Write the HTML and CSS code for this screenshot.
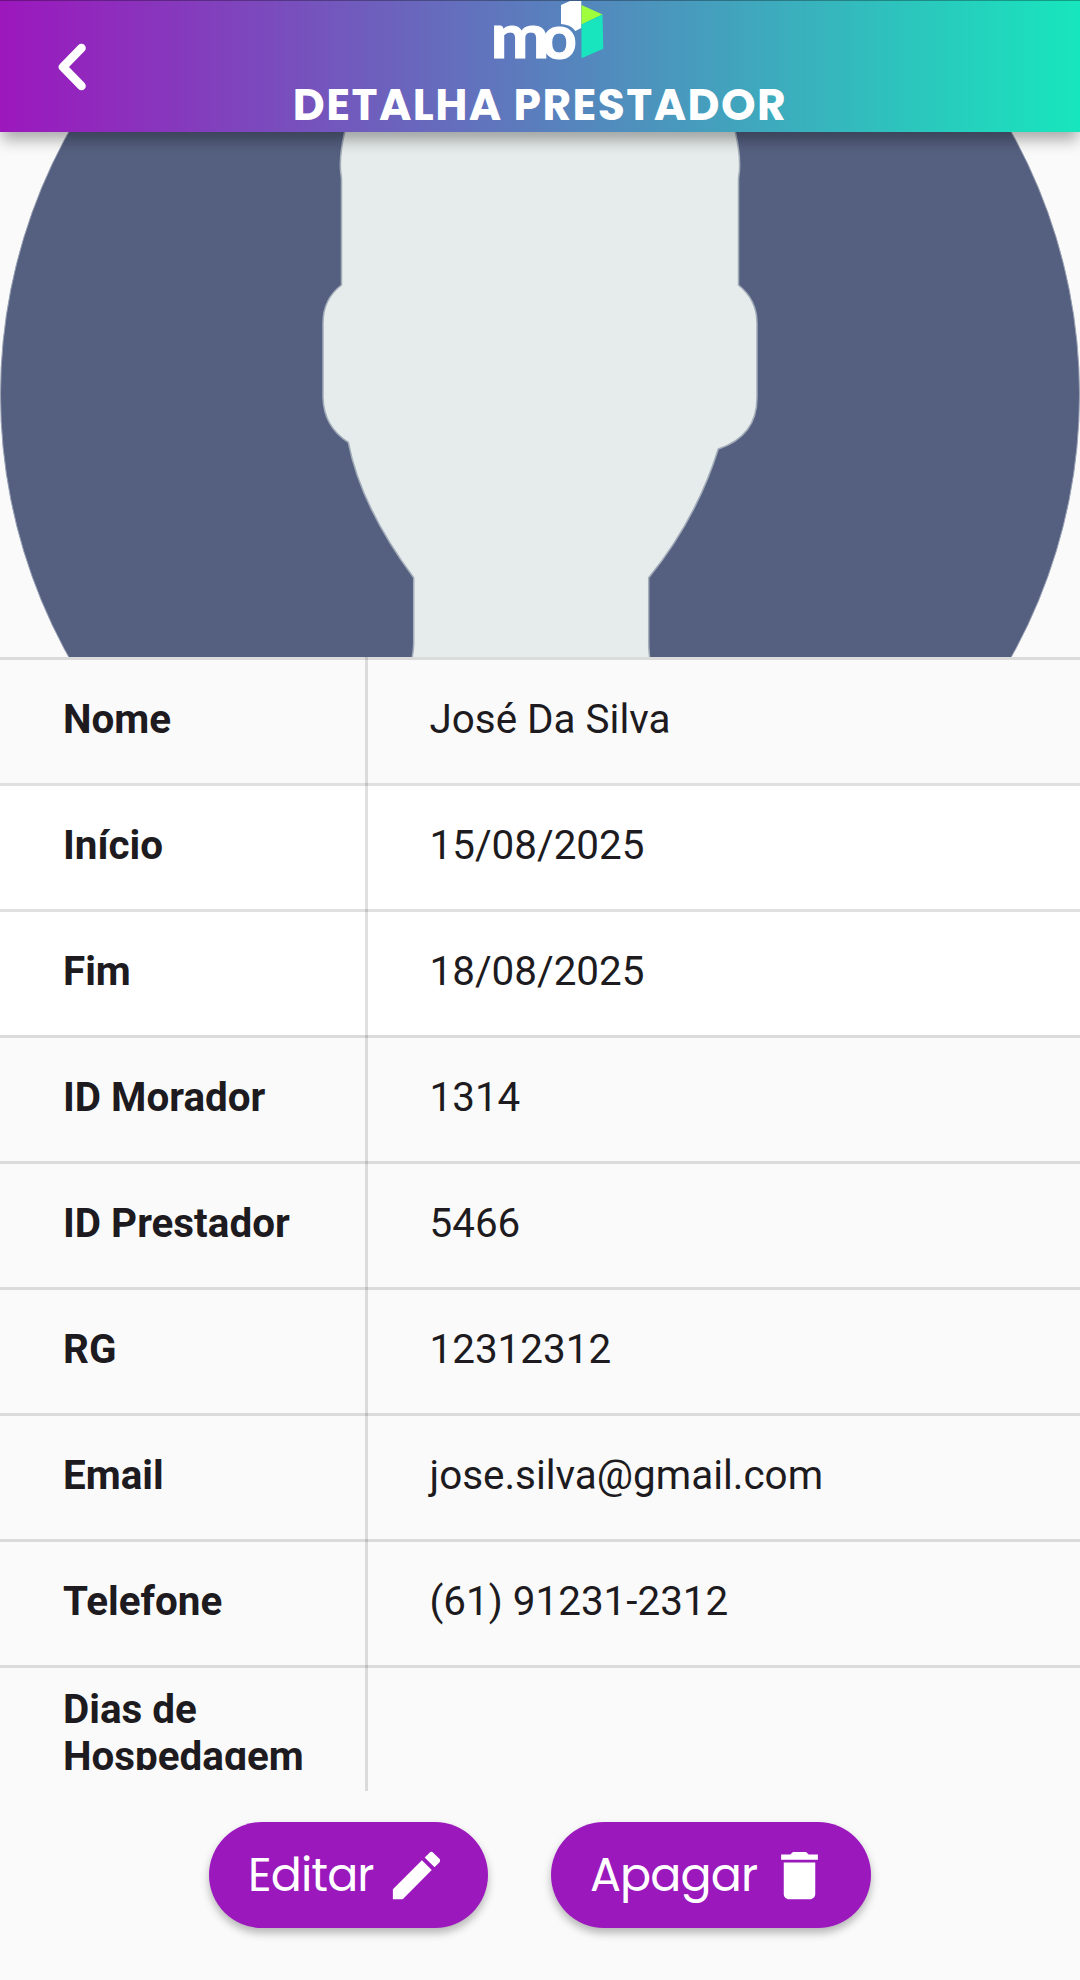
FILE: index.html
```html
<!DOCTYPE html>
<html lang="pt-BR">
<head>
<meta charset="utf-8">
<title>Detalha Prestador</title>
<link rel="stylesheet" href="styles.css">
</head>
<body>
<header class="topbar">
  <button class="back" aria-label="Voltar">
    <svg width="36" height="56" viewBox="0 0 36 56"><path d="M27.500 9 9 28l18.500 19" fill="none" stroke="#fff" stroke-width="8.600" stroke-linecap="round" stroke-linejoin="round"/></svg>
  </button>
  <div class="brand">
    <svg class="logo" width="120" height="70" viewBox="0 0 120 70">
      <text class="logo-text" x="8.500" y="58" textLength="59" lengthAdjust="spacingAndGlyphs">m</text>
      <text class="logo-text" x="77.300" y="58.500" text-anchor="middle">o</text>
      <path d="M79 5 88 1h11.300v27l-6 3Q89 24.500 79 24z" fill="#fff"/>
      <path d="M99.500 5l21 9.500-21 10z" fill="#a0ff3c"/>
      <path d="M99.500 24.500l21-10 .8 34.200-21.800 9.600z" fill="#18e5bd"/>
    </svg>
    <h1 class="title">DETALHA PRESTADOR</h1>
  </div>
</header>
<main>
  <svg class="photo" width="1080" height="525" viewBox="0 132 1080 525">
    <circle class="disc" cx="540" cy="394.500" r="539.500"/>
    <path class="figure" d="M340 100 344.700 132Q339.500 154 340.500 170L341.500 179V285Q323 299 323 323V398Q324 427 348.300 442.300Q361 507 413.700 577.700V643Q413.700 651 410 670H651Q648.700 651 648.700 643V577.700Q696 520 718.300 449Q757 436 757 398V323Q757 300 738.500 285V179L739.500 170Q740.500 154 735.300 132L740 100z"/>
  </svg>
  <dl class="table">
    <div class="row"><dt>Nome</dt><dd>José Da Silva</dd></div>
    <div class="row row-white"><dt>Início</dt><dd>15/08/2025</dd></div>
    <div class="row row-white"><dt>Fim</dt><dd>18/08/2025</dd></div>
    <div class="row"><dt>ID Morador</dt><dd>1314</dd></div>
    <div class="row"><dt>ID Prestador</dt><dd>5466</dd></div>
    <div class="row"><dt>RG</dt><dd>12312312</dd></div>
    <div class="row"><dt>Email</dt><dd>jose.silva@gmail.com</dd></div>
    <div class="row"><dt>Telefone</dt><dd>(61) 91231-2312</dd></div>
    <div class="row"><dt><span class="clip">Dias de<br>Hospedagem</span></dt><dd></dd></div>
  </dl>
</main>
<footer class="actions">
  <button class="btn btn-edit"><span class="btn-label">Editar</span>
    <svg width="63" height="63" viewBox="0 0 24 24"><path fill="#fff" d="M3 17.250V21h3.750L17.810 9.940l-3.750-3.750L3 17.250zM20.710 7.040c.39-.39.39-1.020 0-1.410l-2.340-2.340c-.39-.39-1.020-.39-1.410 0l-1.830 1.830 3.750 3.750 1.830-1.830z"/></svg>
  </button>
  <button class="btn btn-delete"><span class="btn-label">Apagar</span>
    <svg width="63" height="63" viewBox="0 0 24 24"><path fill="#fff" d="M6 19c0 1.100.9 2 2 2h8c1.100 0 2-.9 2-2V7H6v12zM19 4h-3.500l-1-1h-5l-1 1H5v2h14V4z"/></svg>
  </button>
</footer>
</body>
</html>
```
FILE: styles.css
```css
* { box-sizing: border-box; margin: 0; padding: 0; }
body {
  width: 1080px;
  height: 1980px;
  overflow: hidden;
  display: flex;
  flex-direction: column;
  background: #fafafa;
  color: #1d1b20;
  font-family: Roboto, sans-serif;
}
button { border: 0; background: none; color: inherit; }
svg { display: block; flex: none; }

.topbar {
  position: relative;
  z-index: 1;
  height: 132px;
  flex: none;
  display: grid;
  grid-template-columns: 140px 800px 140px;
  background: linear-gradient(90deg, #9c17bd, #17e6bd);
  box-shadow: inset 0 1px rgba(0, 0, 0, .3), 0 10px 14px -2px rgba(0, 0, 0, .32);
}
.back { padding: 39px 0 0 54px; align-self: start; }
.brand { display: flex; flex-direction: column; align-items: center; }
.logo { overflow: visible; margin-left: 4px; }
.logo-text { font: 700 61px Lato, sans-serif; fill: #fff; stroke: #fff; stroke-width: 1.2px; }
.title {
  margin-top: 9px;
  color: #fff;
  font: 700 44px/52px Poppins, Inter, sans-serif;
  letter-spacing: 1.45px;
  white-space: nowrap;
}

.photo { overflow: hidden; }
.disc { fill: #556080; stroke: #98a0b3; stroke-width: 1; }
.figure { fill: #e6eceb; stroke: #a3acb9; stroke-width: 1.5; }

.row {
  height: 126px;
  display: grid;
  grid-template-columns: 368px 1fr;
  box-shadow: inset 0 3px rgba(0, 0, 0, .12);
}
.row-white { background-color: #fff; }
dt, dd { display: flex; align-items: center; padding: 0 0 2px 61.500px; font-size: 40.400px; line-height: 47px; }
dt { padding-left: 63px; font-weight: 700; border-right: 3px solid rgba(0, 0, 0, .12); }
.clip { height: 84px; margin-top: 2px; overflow: hidden; }

.actions { display: flex; justify-content: center; gap: 63px; padding-top: 31.400px; }
.btn {
  height: 105.400px;
  border-radius: 53px;
  display: flex;
  align-items: center;
  justify-content: space-between;
  padding: 0 40px 0 39px;
  background: #9b18bd;
  color: #fff;
  box-shadow: 0 5px 8px rgba(0, 0, 0, .28);
}
.btn-edit { width: 279px; }
.btn-delete { width: 320px; }
.btn-label { font: 400 46px/60px Poppins, Inter, sans-serif; letter-spacing: -.9px; }
```
